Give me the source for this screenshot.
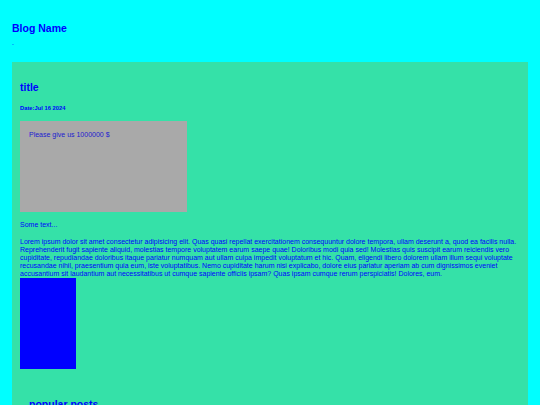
export default function App() {
  return (
    <div className="min-h-screen bg-[#00ffff] px-[12px] pt-[22px] font-['Liberation_Sans',Arial,sans-serif] text-[#0000ff]">
      <header className="h-[40px]">
        <h2 className="text-[10.5px] font-bold leading-[12px]">Blog Name</h2>
        <p className="mt-[5px] text-[7px] leading-[8px]">.</p>
      </header>

      <main className="bg-[#35e1a8] px-[8px] pt-[19px] pb-[20px]">
        <article>
          <h2 className="text-[10.5px] font-bold leading-[12px]">title</h2>
          <h5 className="mt-[12px] text-[5.8px] font-bold leading-[7px]">Date:Jul 16 2024</h5>

          <div className="mt-[9px] h-[91px] w-[167px] bg-[#a9a9a9] px-[9px] pt-[10px]">
            <p className="text-[7px] leading-[8px] text-[#2020d0]">Please give us 1000000 $</p>
          </div>

          <p className="mt-[9px] text-[7px] leading-[8px]">Some text...</p>
          <p className="mt-[9px] text-[7px] leading-[8px]">
            Lorem ipsum dolor sit amet consectetur adipisicing elit. Quas quasi repellat exercitationem consequuntur dolore tempora, ullam deserunt a, quod ea facilis nulla. Reprehenderit fugit sapiente aliquid, molestias tempore voluptatem earum saepe quae! Doloribus modi quia sed! Molestias quis suscipit earum reiciendis vero cupiditate, repudiandae doloribus itaque pariatur numquam aut ullam culpa impedit voluptatum et hic. Quam, eligendi libero dolorem ullam illum sequi voluptate recusandae nihil, praesentium quia eum, iste voluptatibus. Nemo cupiditate harum nisi explicabo, dolore eius pariatur aperiam ab cum dignissimos eveniet accusantium sit laudantium aut necessitatibus ut cumque sapiente officiis ipsam? Quas ipsam cumque rerum perspiciatis! Dolores, eum.
          </p>
          <div className="h-[91px] w-[56px] bg-[#0000ff]" />
        </article>

        <aside className="mt-[29px] px-[9px]">
          <h2 className="text-[10.5px] font-bold leading-[12px]">popular posts</h2>
        </aside>
      </main>
    </div>
  );
}
